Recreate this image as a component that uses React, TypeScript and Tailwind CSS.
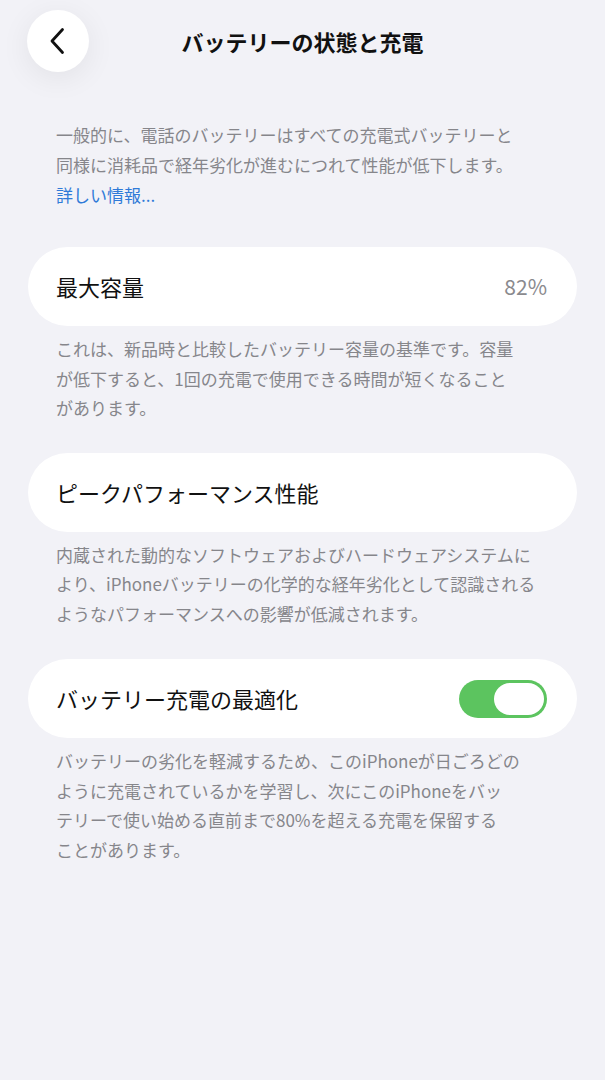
const font = { fontFamily: '"Noto Sans CJK JP", "Noto Sans", sans-serif' };

type Section = {
  label: string;
  right?: "value" | "toggle";
  value?: string;
  note: string[];
  gap: string;
};

const sections: Section[] = [
  {
    label: "最大容量",
    right: "value",
    value: "82%",
    note: [
      "これは、新品時と比較したバッテリー容量の基準です。容量",
      "が低下すると、1回の充電で使用できる時間が短くなること",
      "があります。",
    ],
    gap: "mt-[37px]",
  },
  {
    label: "ピークパフォーマンス性能",
    note: [
      "内蔵された動的なソフトウェアおよびハードウェアシステムに",
      "より、iPhoneバッテリーの化学的な経年劣化として認識される",
      "ようなパフォーマンスへの影響が低減されます。",
    ],
    gap: "mt-[30px]",
  },
  {
    label: "バッテリー充電の最適化",
    right: "toggle",
    note: [
      "バッテリーの劣化を軽減するため、このiPhoneが日ごろどの",
      "ように充電されているかを学習し、次にこのiPhoneをバッ",
      "テリーで使い始める直前まで80%を超える充電を保留する",
      "ことがあります。",
    ],
    gap: "mt-[31px]",
  },
];

function Toggle() {
  return (
    <div className="w-[88px] h-[38px] rounded-full bg-[#5cc45f] flex items-center justify-end pr-[3px]">
      <div className="w-[50px] h-[32px] rounded-full bg-white" />
    </div>
  );
}

export default function App() {
  return (
    <div className="min-h-[1080px] w-full bg-[#f2f2f7] pb-10" style={font}>
      <header className="relative h-[72px] pt-[10px]">
        <button className="absolute left-[27px] top-[10px] w-[62px] h-[62px] rounded-full bg-white shadow-[0_6px_30px_rgba(0,0,0,0.07)] flex items-center justify-center">
          <svg width="20" height="30" viewBox="0 0 20 30" fill="none">
            <path d="M14.5 3.5 L4 15 L14.5 26.5" stroke="#111" strokeWidth="2.8" strokeLinecap="round" strokeLinejoin="round" />
          </svg>
        </button>
        <h1 className="text-center text-[22px] font-bold text-[#111] leading-[62px]">
          バッテリーの状態と充電
        </h1>
      </header>

      <div className="mt-[48px] px-[56px] text-[17px] leading-[30px] text-[#86868b]">
        <p>一般的に、電話のバッテリーはすべての充電式バッテリーと</p>
        <p>同様に消耗品で経年劣化が進むにつれて性能が低下します。</p>
        <p className="text-[#2f7ad8]">詳しい情報...</p>
      </div>

      {sections.map((s) => (
        <section key={s.label} className={s.gap}>
          <div className="mx-[28px] h-[79px] rounded-full bg-white flex items-center justify-between pl-[28px] pr-[30px]">
            <span className="text-[22px] text-[#111]">{s.label}</span>
            {s.right === "value" && <span className="text-[21px] text-[#8a8a8e]">{s.value}</span>}
            {s.right === "toggle" && <Toggle />}
          </div>
          <div className="mt-[8px] px-[56px] text-[17px] leading-[29.5px] text-[#86868b]">
            {s.note.map((line) => (
              <p key={line}>{line}</p>
            ))}
          </div>
        </section>
      ))}
    </div>
  );
}
